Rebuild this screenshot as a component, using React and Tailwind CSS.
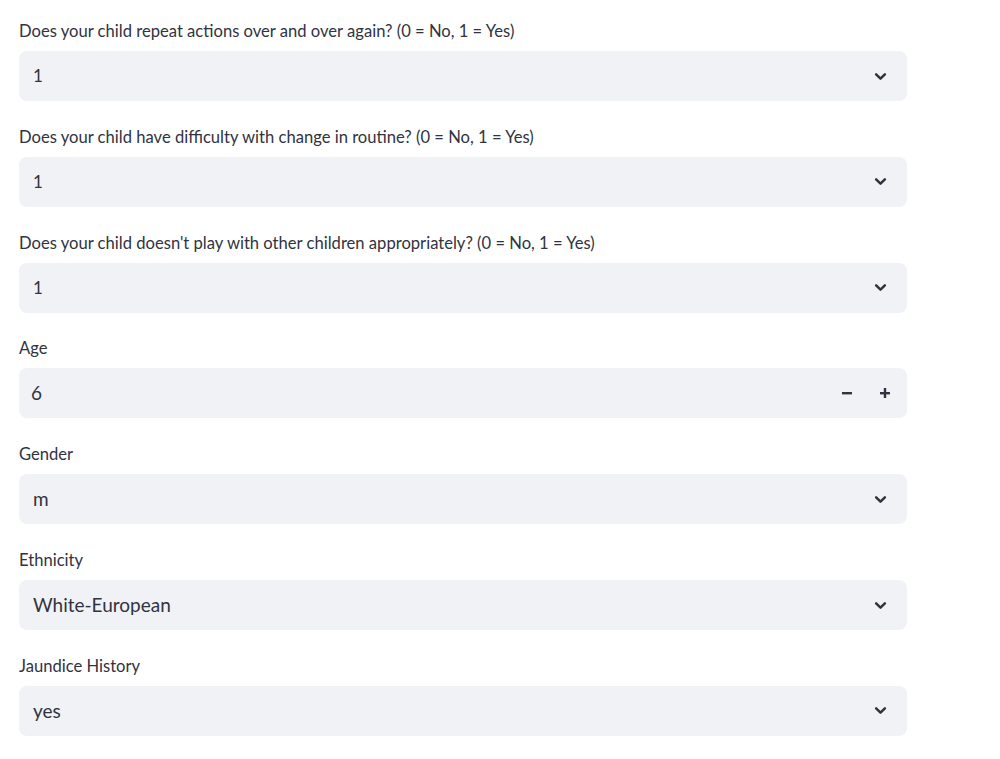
import React from "react";

const Chevron = () => (
  <svg width="15" height="15" viewBox="0 0 24 24" fill="none" stroke="#31333f" strokeWidth="4" strokeLinecap="round" strokeLinejoin="round">
    <path d="M5 8.5l7 7 7-7" />
  </svg>
);

function Select({ label, value, big }) {
  return (
    <div className="flex flex-col">
      <div className="h-6 flex items-center text-[16.6px] text-[#31333f] leading-6">{label}</div>
      <div className="mt-2 h-[50px] w-[888px] rounded-lg bg-[#f0f2f6] flex items-center justify-between pl-[14px] pr-[19px]">
        <span className={big ? "text-[19px] text-[#31333f]" : "text-[17px] text-[#31333f]"}>{value}</span>
        <Chevron />
      </div>
    </div>
  );
}

function NumberInput({ label, value }) {
  return (
    <div className="flex flex-col">
      <div className="h-6 flex items-center text-[16.6px] text-[#31333f] leading-6">{label}</div>
      <div className="mt-2 h-[50px] w-[888px] rounded-lg bg-[#f0f2f6] flex items-center justify-between pl-[12px] pr-[16px]">
        <span className="text-[19px] text-[#31333f]">{value}</span>
        <div className="flex items-center gap-[26px]">
          <svg width="12" height="12" viewBox="0 0 12 12"><rect x="1" y="5" width="10" height="2.4" fill="#31333f" /></svg>
          <svg width="12" height="12" viewBox="0 0 12 12"><rect x="1" y="5" width="10" height="2.4" fill="#31333f" /><rect x="4.8" y="1" width="2.4" height="10" fill="#31333f" /></svg>
        </div>
      </div>
    </div>
  );
}

export default function App() {
  return (
    <div className="w-[1000px] h-[759px] bg-white pt-[19px] pl-[19px] flex flex-col gap-[23.83px]" style={{ fontFamily: "Lato, 'Noto Sans', sans-serif" }}>
      <Select label="Does your child repeat actions over and over again? (0 = No, 1 = Yes)" value="1" />
      <Select label="Does your child have difficulty with change in routine? (0 = No, 1 = Yes)" value="1" />
      <Select label="Does your child doesn't play with other children appropriately? (0 = No, 1 = Yes)" value="1" />
      <NumberInput label="Age" value="6" />
      <Select label="Gender" value="m" big />
      <Select label="Ethnicity" value="White-European" big />
      <Select label="Jaundice History" value="yes" big />
    </div>
  );
}
